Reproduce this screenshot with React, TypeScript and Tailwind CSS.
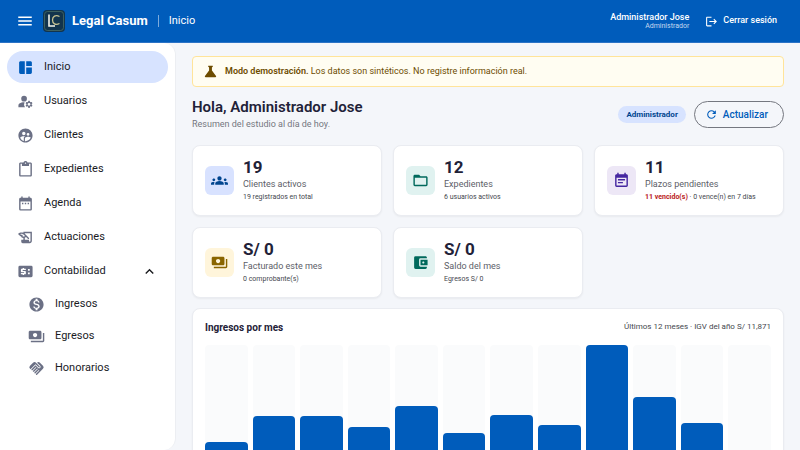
import type { ReactNode } from "react";
import type { IconType } from "react-icons";
import {
  MdAccountBalanceWallet,
  MdContentPaste,
  MdDateRange,
  MdEventNote,
  MdFolderOpen,
  MdGroups,
  MdHandshake,
  MdHistoryEdu,
  MdKeyboardArrowUp,
  MdLogout,
  MdManageAccounts,
  MdMenu,
  MdMonetizationOn,
  MdPayments,
  MdRefresh,
  MdScience,
  MdSpaceDashboard,
  MdSupervisedUserCircle,
} from "react-icons/md";

function LedgerIcon({ className }: { className?: string }) {
  return (
    <svg viewBox="0 0 24 24" className={className} fill="currentColor" aria-hidden="true">
      <path
        fillRule="evenodd"
        d="M4 4h16a2 2 0 0 1 2 2v12a2 2 0 0 1-2 2H4a2 2 0 0 1-2-2V6a2 2 0 0 1 2-2zM8 7v1H6.500a1 1 0 0 0-1 1v3a1 1 0 0 0 1 1h3.500v1.200H5.500v1.800H8v1h2v-1h1.500a1 1 0 0 0 1-1v-2.800a1 1 0 0 0-1-1H8V9.800h4.500V8H10V7zM15.500 8.500v2.300h2.500V8.500zM15.500 13.500v2.300h2.500v-2.300z"
      />
    </svg>
  );
}

function Logo() {
  return (
    <svg viewBox="0 0 24 24" className="size-6 shrink-0" fill="none" aria-hidden="true">
      <rect x="1" y="1" width="22" height="22" rx="4" fill="#12344d" />
      <rect x="2.500" y="2.500" width="19" height="19" rx="3" stroke="#4f7468" strokeWidth=".7" />
      <path d="M7 5.500v11.500h6" stroke="#f3f3ea" strokeWidth="1.600" />
      <path d="M17.500 7.500c-4-2-7 0-7 3.500s3 5.500 7 3.500" stroke="#c8c391" strokeWidth="1.300" />
    </svg>
  );
}

const navItems: { label: string; icon: IconType; active?: boolean }[] = [
  { label: "Inicio", icon: MdSpaceDashboard, active: true },
  { label: "Usuarios", icon: MdManageAccounts },
  { label: "Clientes", icon: MdSupervisedUserCircle },
  { label: "Expedientes", icon: MdContentPaste },
  { label: "Agenda", icon: MdDateRange },
  { label: "Actuaciones", icon: MdHistoryEdu },
];

const accounting: { label: string; icon: IconType }[] = [
  { label: "Ingresos", icon: MdMonetizationOn },
  { label: "Egresos", icon: MdPayments },
  { label: "Honorarios", icon: MdHandshake },
];

const stats: { value: string; label: string; detail: ReactNode; icon: IconType; tone: string }[] = [
  { value: "19", label: "Clientes activos", detail: "19 registrados en total", icon: MdGroups, tone: "bg-[#d8e2ff] text-[#00458f]" },
  { value: "12", label: "Expedientes", detail: "6 usuarios activos", icon: MdFolderOpen, tone: "bg-[#e0f2f0] text-[#00695c]" },
  {
    value: "11",
    label: "Plazos pendientes",
    detail: (
      <>
        <strong className="font-bold text-[#ba1a1a]">11 vencido(s)</strong> · 0 vence(n) en 7 días
      </>
    ),
    icon: MdEventNote,
    tone: "bg-[#ede7f6] text-[#4527a0]",
  },
  { value: "S/ 0", label: "Facturado este mes", detail: "0 comprobante(s)", icon: MdPayments, tone: "bg-[#fff5db] text-[#8a6500]" },
  { value: "S/ 0", label: "Saldo del mes", detail: "Egresos S/ 0", icon: MdAccountBalanceWallet, tone: "bg-[#e0f2f0] text-[#00695c]" },
];

const monthlyIncome = [19, 41, 41, 32, 49, 27, 42, 33, 100, 57, 35, 0];

function Header() {
  return (
    <header className="flex h-[43px] shrink-0 items-center border-b border-[#2b73c6] bg-[#005cbb] pr-[23px] pl-4 text-white">
      <button type="button" aria-label="Menú" className="mr-2">
        <MdMenu className="size-[18px]" />
      </button>
      <Logo />
      <span className="ml-[6px] text-[13px] font-bold">Legal Casum</span>
      <span className="mx-[10px] h-3 w-px bg-[#7dabdc]" />
      <span className="text-[11px]">Inicio</span>
      <div className="ml-auto text-right">
        <p className="text-[9px] leading-[10px] font-medium">Administrador Jose</p>
        <p className="text-[7px] leading-[9px] text-[#c4d9f0]">Administrador</p>
      </div>
      <button type="button" className="ml-4 flex items-center gap-[5px] text-[9px] font-medium">
        <MdLogout className="size-[13px]" />
        Cerrar sesión
      </button>
    </header>
  );
}

function Sidebar() {
  return (
    <nav className="w-44 shrink-0 rounded-r-xl border-r border-[#eceef2] bg-white px-[7px] pt-2 text-[11px] text-[#1a1b1f]">
      <ul className="flex flex-col gap-[2px]">
        {navItems.map(({ label, icon: Icon, active }) => (
          <li key={label}>
            <a
              href="#"
              aria-current={active ? "page" : undefined}
              className={
                active
                  ? "flex h-8 items-center gap-[10px] rounded-full bg-[#d7e3ff] pl-[10px]"
                  : "flex h-8 items-center gap-[10px] pl-[10px]"
              }
            >
              <Icon className={active ? "size-[17px] text-[#005cbb]" : "size-[17px] text-[#6b7085]"} />
              {label}
            </a>
          </li>
        ))}
        <li>
          <button type="button" aria-expanded="true" className="flex h-8 w-full items-center gap-[10px] pr-[10px] pl-[10px]">
            <LedgerIcon className="size-[17px] text-[#6b7085]" />
            Contabilidad
            <MdKeyboardArrowUp className="ml-auto size-[17px]" />
          </button>
          <ul className="pt-px">
            {accounting.map(({ label, icon: Icon }) => (
              <li key={label}>
                <a href="#" className="flex h-8 items-center gap-[10px] pl-[21px]">
                  <Icon className="size-[17px] text-[#6b7085]" />
                  {label}
                </a>
              </li>
            ))}
          </ul>
        </li>
      </ul>
    </nav>
  );
}

function IncomeChart() {
  return (
    <section className="mt-[10px] rounded-lg border border-[#eaecf1] bg-white p-3 shadow-xs">
      <div className="flex h-3 items-center justify-between">
        <h2 className="text-[10px] font-bold text-[#1f2238]">Ingresos por mes</h2>
        <p className="text-[8px] text-[#44474e]">Últimos 12 meses · IGV del año S/ 11,871</p>
      </div>
      <div className="mt-3 grid h-[120px] grid-cols-12 gap-[5px]">
        {monthlyIncome.map((value, month) => (
          <div key={month} className="flex flex-col justify-end rounded-t bg-[#fafbfc]">
            <div className="rounded-t bg-[#005cbb]" style={{ height: `${value}%` }} />
          </div>
        ))}
      </div>
    </section>
  );
}

export default function App() {
  return (
    <div className="flex h-screen flex-col overflow-hidden bg-[#f4f6fa] font-['Roboto',sans-serif]">
      <Header />
      <div className="flex min-h-0 flex-1">
        <Sidebar />
        <main className="min-w-0 flex-1 overflow-hidden px-4 pt-[13px]">
          <div className="flex h-[31px] items-center gap-[6px] rounded border border-[#ffe49a] bg-[#fffdf2] px-[9px] text-[9px] text-[#6d4c00]">
            <MdScience className="size-[17px] shrink-0" />
            <p>
              <strong className="font-semibold">Modo demostración.</strong> Los datos son sintéticos. No registre información real.
            </p>
          </div>

          <div className="mt-[11px] flex items-center gap-2">
            <div className="mr-auto">
              <h1 className="text-[15px] leading-[18px] font-semibold text-[#1f2238]">Hola, Administrador Jose</h1>
              <p className="mt-[3px] text-[9px] leading-[11px] text-[#74777f]">Resumen del estudio al día de hoy.</p>
            </div>
            <span className="rounded-full bg-[#d7e3ff] px-2 text-[8px] leading-[17px] font-bold text-[#00458f]">Administrador</span>
            <button
              type="button"
              className="flex h-[27px] items-center gap-[5px] rounded-full border border-[#74777f] pr-[15px] pl-[10px] text-[10px] font-medium text-[#005cbb]"
            >
              <MdRefresh className="size-[13px]" />
              Actualizar
            </button>
          </div>

          <div className="mt-[15px] grid grid-cols-3 gap-[11px]">
            {stats.map(({ value, label, detail, icon: Icon, tone }) => (
              <article key={label} className="flex h-[71px] items-center gap-[9px] rounded-lg border border-[#eaecf1] bg-white px-3 shadow-xs">
                <div className={`flex size-[29px] shrink-0 items-center justify-center rounded-md ${tone}`}>
                  <Icon className="size-[17px]" />
                </div>
                <div className="min-w-0">
                  <p className="text-[17px] leading-5 font-bold text-[#1f2238]">{value}</p>
                  <p className="mt-px text-[9px] leading-[13px] text-[#5d6068]">{label}</p>
                  <p className="text-[7px] leading-[13px] whitespace-nowrap text-[#44474e]">{detail}</p>
                </div>
              </article>
            ))}
          </div>

          <IncomeChart />
        </main>
      </div>
    </div>
  );
}
